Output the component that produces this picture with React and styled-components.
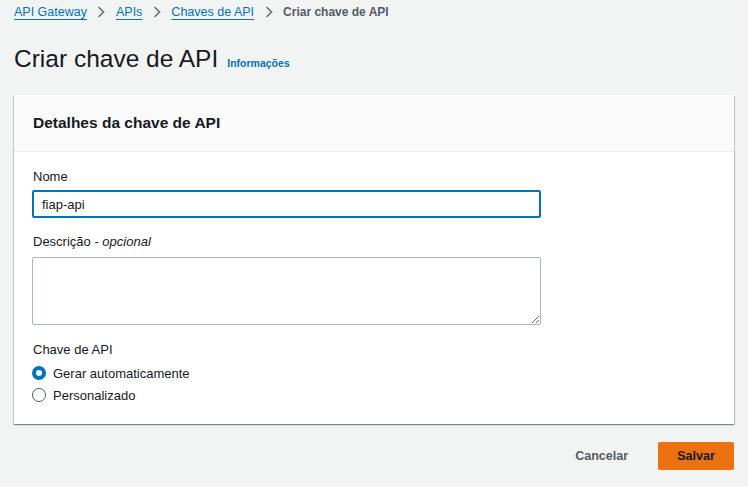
import React from 'react';
import styled, { createGlobalStyle } from 'styled-components';

const GlobalStyle = createGlobalStyle`
  html, body {
    margin: 0;
    padding: 0;
    background: #f2f3f3;
    font-family: "Liberation Sans", Arial, sans-serif;
    color: #16191f;
  }
`;

const Page = styled.div`
  padding: 2px 14px 0 14px;
  width: 720px;
`;

const Crumbs = styled.nav`
  display: flex;
  align-items: center;
  height: 20px;
  font-size: 12.5px;
`;

const Crumb = styled.a`
  color: #0073bb;
  text-decoration: underline;
  text-underline-offset: 3px;
  text-decoration-thickness: 1px;
`;

const Current = styled.span`
  color: #545b64;
  font-weight: bold;
  font-size: 12px;
`;

const Sep = styled.span`
  display: flex;
  align-items: center;
  padding: 0 10.5px;
`;

const TitleRow = styled.div`
  display: flex;
  align-items: baseline;
  gap: 9px;
  margin-top: 20px;
  height: 32px;
`;

const Title = styled.h1`
  margin: 0;
  font-size: 24.5px;
  line-height: 34px;
  font-weight: normal;
  color: #16191f;
`;

const Info = styled.a`
  font-size: 10.5px;
  font-weight: bold;
  color: #0073bb;
`;

const Panel = styled.section`
  margin-top: 21px;
  background: #fff;
  box-shadow: 0 1px 1px 0 rgba(0, 28, 36, 0.3), 1px 1px 1px 0 rgba(0, 28, 36, 0.15),
    -1px 1px 1px 0 rgba(0, 28, 36, 0.15);
`;

const PanelHeader = styled.header`
  height: 56px;
  display: flex;
  align-items: center;
  padding: 0 19px;
  background: #fafafa;
  border-bottom: 1px solid #eaeded;
`;

const PanelTitle = styled.h2`
  margin: 0;
  font-size: 15.5px;
  font-weight: bold;
`;

const PanelBody = styled.div`
  padding: 16px 193px 18px 18px;
  display: flex;
  flex-direction: column;
`;

const Label = styled.label`
  display: block;
  font-size: 13px;
  line-height: 18px;
  padding-left: 1px;
  margin-top: ${p => p.$top || 0}px;
  margin-bottom: ${p => p.$bottom || 4}px;
  em {
    font-style: italic;
  }
`;

const TextInput = styled.input`
  box-sizing: border-box;
  width: 509px;
  height: 28px;
  border: 2px solid #0073bb;
  border-radius: 2px;
  padding: 0 8px;
  font-family: inherit;
  font-size: 13px;
  color: #16191f;
  outline: none;
`;

const TextArea = styled.textarea`
  box-sizing: border-box;
  width: 509px;
  height: 68px;
  border: 1px solid #aab7b8;
  border-radius: 2px;
  font-family: inherit;
  font-size: 13px;
  resize: vertical;
  outline: none;
  display: block;
`;

const RadioRow = styled.label`
  display: flex;
  align-items: center;
  gap: 7px;
  height: 22px;
  font-size: 13px;
`;

const Dot = styled.span`
  box-sizing: border-box;
  width: 14px;
  height: 14px;
  border-radius: 50%;
  border: ${p => (p.$on ? '4px solid #0073bb' : '1px solid #545b64')};
  background: #fff;
`;

const Actions = styled.div`
  display: flex;
  justify-content: flex-end;
  align-items: center;
  gap: 10px;
  margin-top: 18px;
`;

const Button = styled.button`
  height: 28px;
  border: none;
  border-radius: 2px;
  font-family: inherit;
  font-weight: bold;
  font-size: 12.5px;
  cursor: pointer;
  padding: ${p => (p.$primary ? '0' : '0 20px')};
  background: ${p => (p.$primary ? '#ec7211' : 'transparent')};
  color: ${p => (p.$primary ? '#16191f' : '#545b64')};
  width: ${p => (p.$primary ? '76px' : 'auto')};
`;

const Chevron = () => (
  <svg width="8" height="12" viewBox="0 0 8 12">
    <polyline points="1.5,1 6.5,6 1.5,11" fill="none" stroke="#687078" strokeWidth="1.6" />
  </svg>
);

export default function App() {
  return (
    <>
      <GlobalStyle />
      <Page>
        <Crumbs>
          <Crumb href="#">API Gateway</Crumb>
          <Sep><Chevron /></Sep>
          <Crumb href="#">APIs</Crumb>
          <Sep><Chevron /></Sep>
          <Crumb href="#">Chaves de API</Crumb>
          <Sep><Chevron /></Sep>
          <Current>Criar chave de API</Current>
        </Crumbs>
        <TitleRow>
          <Title>Criar chave de API</Title>
          <Info>Informações</Info>
        </TitleRow>
        <Panel>
          <PanelHeader>
            <PanelTitle>Detalhes da chave de API</PanelTitle>
          </PanelHeader>
          <PanelBody>
            <Label>Nome</Label>
            <TextInput defaultValue="fiap-api" />
            <Label $top={15} $bottom={6}>Descrição - <em>opcional</em></Label>
            <TextArea />
            <Label $top={16} $bottom={3}>Chave de API</Label>
            <RadioRow><Dot $on />Gerar automaticamente</RadioRow>
            <RadioRow><Dot />Personalizado</RadioRow>
          </PanelBody>
        </Panel>
        <Actions>
          <Button>Cancelar</Button>
          <Button $primary>Salvar</Button>
        </Actions>
      </Page>
    </>
  );
}
